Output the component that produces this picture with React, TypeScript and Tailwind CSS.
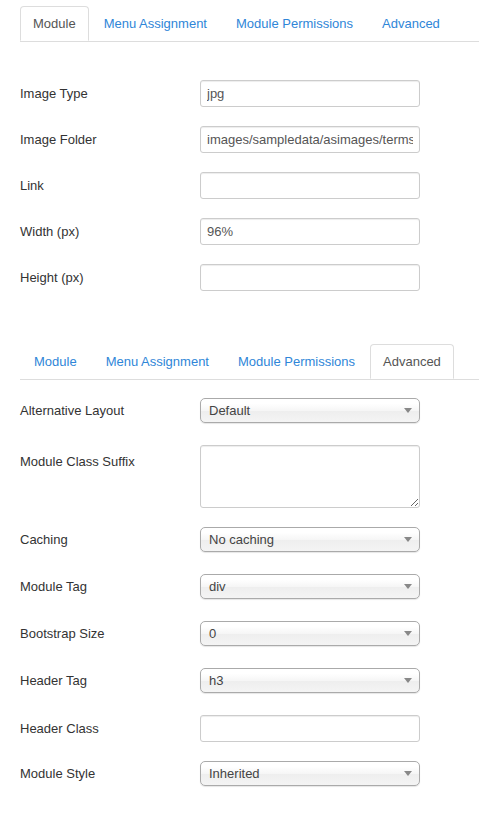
import React from "react";

const TABS = ["Module", "Menu Assignment", "Module Permissions", "Advanced"];

const TabBar: React.FC<{ active: string }> = ({ active }) => (
  <div className="flex border-b border-[#dddddd] pl-0">
    {TABS.map((t) => (
      <div
        key={t}
        className={
          t === active
            ? "h-[35px] px-[12px] pt-[1px] mr-[1px] -mb-px flex items-center border border-[#dddddd] border-b-white bg-white rounded-t-[4px] text-[#555555]"
            : "h-[35px] px-[13px] pt-[1px] mr-[1px] flex items-center border border-transparent text-[#2f86d8]"
        }
      >
        {t}
      </div>
    ))}
  </div>
);

const TextRow: React.FC<{ label: string; value?: string }> = ({
  label,
  value = "",
}) => (
  <div className="flex items-center mb-[19px]">
    <div className="w-[180px] text-[#333333]">{label}</div>
    <input
      readOnly
      value={value}
      className="w-[220px] h-[27px] pl-[6px] pr-[6px] border border-[#cccccc] rounded-[3px] bg-white text-[#555555] outline-none shadow-[inset_0_1px_1px_rgba(0,0,0,0.075)]"
    />
  </div>
);

const SelectRow: React.FC<{ label: string; value: string }> = ({
  label,
  value,
}) => (
  <div className="flex items-center mb-[22px]">
    <div className="w-[180px] text-[#333333]">{label}</div>
    <div className="w-[220px] h-[25px] pl-[8px] pr-[8px] flex items-center justify-between border border-[#aaaaaa] rounded-[5px] bg-[linear-gradient(#ffffff_20%,#f6f6f6_50%,#eeeeee_52%,#f4f4f4_100%)] shadow-[0_1px_1px_rgba(0,0,0,0.1)] text-[#444444]">
      <span>{value}</span>
      <svg width="8" height="5" viewBox="0 0 8 5" className="mr-[-1px]">
        <path d="M0 0 L8 0 L4 5 Z" fill="#888888" />
      </svg>
    </div>
  </div>
);

const App: React.FC = () => {
  return (
    <div className="w-[479px] min-h-[817px] bg-white pl-[20px] pt-[6px] text-[13px] font-['Liberation_Sans',Arial,sans-serif]">
      <TabBar active="Module" />
      <div className="pt-[38px]">
        <TextRow label="Image Type" value="jpg" />
        <TextRow
          label="Image Folder"
          value="images/sampledata/asimages/termsandconditions"
        />
        <TextRow label="Link" />
        <TextRow label="Width (px)" value="96%" />
        <TextRow label="Height (px)" />
      </div>

      <div className="pt-[34px]">
        <TabBar active="Advanced" />
      </div>
      <div className="pt-[18px]">
        <SelectRow label="Alternative Layout" value="Default" />
        <div className="flex items-start mb-[19px]">
          <div className="w-[180px] text-[#333333] pt-[7px]">
            Module Class Suffix
          </div>
          <textarea
            readOnly
            className="w-[220px] h-[63px] border border-[#cccccc] rounded-[3px] bg-white outline-none shadow-[inset_0_1px_1px_rgba(0,0,0,0.075)]"
          />
        </div>
        <SelectRow label="Caching" value="No caching" />
        <SelectRow label="Module Tag" value="div" />
        <SelectRow label="Bootstrap Size" value="0" />
        <SelectRow label="Header Tag" value="h3" />
        <TextRow label="Header Class" />
        <SelectRow label="Module Style" value="Inherited" />
      </div>
    </div>
  );
};

export default App;
